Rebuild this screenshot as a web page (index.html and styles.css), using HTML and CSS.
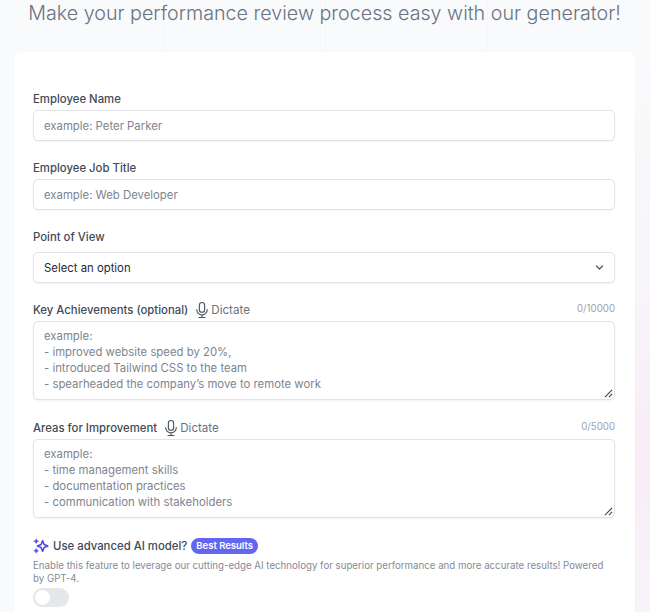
FILE: index.html
```html
<html>
<head>
    <link rel="stylesheet" href="styles.css">
</head>
<body>
    <div class="page">
        <div class="grid-lines"><span></span><span></span><span></span></div>
        <h1 class="title">Make your performance review process easy with our generator!</h1>
        <form class="card">
            <div class="field">
                <label class="label">Employee Name</label>
                <div class="input placeholder">example: Peter Parker</div>
            </div>
            <div class="field">
                <label class="label">Employee Job Title</label>
                <div class="input placeholder">example: Web Developer</div>
            </div>
            <div class="field">
                <label class="label label-select">Point of View</label>
                <div class="input select">
                    <span>Select an option</span>
                    <svg class="chevron" viewBox="0 0 20 20" fill="none" stroke="#4b5563" stroke-width="1.6" stroke-linecap="round" stroke-linejoin="round"><path d="M6 8l4 4 4-4"/></svg>
                </div>
            </div>
            <div class="field field-area">
                <div class="label-row">
                    <label class="label">Key Achievements (optional)</label>
                    <span class="dictate">
                        <svg class="mic" viewBox="0 0 24 24" fill="none" stroke="#4b5563" stroke-width="1.5" stroke-linecap="round" stroke-linejoin="round"><rect x="8.5" y="2" width="7" height="13" rx="3.5"/><path d="M5 11.5a7 7 0 0 0 14 0M12 18.5V22M8 22h8"/></svg>
                        Dictate
                    </span>
                    <span class="count">0/10000</span>
                </div>
                <div class="input textarea placeholder">
                    example:<br>- improved website speed by 20%,<br>- introduced Tailwind CSS to the team<br>- spearheaded the company’s move to remote work
                    <svg class="grip" viewBox="0 0 10 10" fill="none" stroke="#374151" stroke-width="1.2"><path d="M1 9l8-8M5.5 9L9 5.5"/></svg>
                </div>
            </div>
            <div class="field field-area">
                <div class="label-row">
                    <label class="label">Areas for Improvement</label>
                    <span class="dictate">
                        <svg class="mic" viewBox="0 0 24 24" fill="none" stroke="#4b5563" stroke-width="1.5" stroke-linecap="round" stroke-linejoin="round"><rect x="8.5" y="2" width="7" height="13" rx="3.5"/><path d="M5 11.5a7 7 0 0 0 14 0M12 18.5V22M8 22h8"/></svg>
                        Dictate
                    </span>
                    <span class="count">0/5000</span>
                </div>
                <div class="input textarea placeholder">
                    example:<br>- time management skills<br>- documentation practices<br>- communication with stakeholders
                    <svg class="grip" viewBox="0 0 10 10" fill="none" stroke="#374151" stroke-width="1.2"><path d="M1 9l8-8M5.5 9L9 5.5"/></svg>
                </div>
            </div>
            <div class="advanced">
                <div class="advanced-head">
                    <svg class="sparkle" viewBox="0 0 20 20" fill="none" stroke="#4f46e5" stroke-width="2" stroke-linejoin="round"><path d="M12 3.5l1.9 4.6 4.6 1.9-4.6 1.9L12 16.500l-1.900-4.600L5.500 10l4.600-1.900z"/><path d="M4 1l.9 2.100L7 4l-2.100.9L4 7l-.9-2.100L1 4l2.100-.9zM4 13l.9 2.100L7 16l-2.100.9L4 19l-.9-2.100L1 16l2.100-.9z" fill="#4f46e5" stroke-width="0.6"/></svg>
                    <span class="advanced-label">Use advanced AI model?</span>
                    <span class="badge">Best Results</span>
                </div>
                <p class="advanced-text">Enable this feature to leverage our cutting-edge AI technology for superior performance and more accurate results! Powered by GPT-4.</p>
                <div class="toggle"><span class="knob"></span></div>
            </div>
        </form>
    </div>
</body>
</html>
```

FILE: styles.css
```css
html, body {
    margin: 0;
    height: 100%;
    overflow: hidden;
}
body {
    font-family: Inter, "Liberation Sans", sans-serif;
    color: #374151;
}
.page {
    position: relative;
    height: 612px;
    overflow: hidden;
    padding: 0 15px 0 14px;
    box-sizing: border-box;
    background: radial-gradient(circle at 100% 75%, #f9ecf6 0, #f8f5fb 22%, #f8fafc 50%);
}
.grid-lines {
    position: absolute;
    top: 0;
    left: 0;
    width: 100%;
    height: 52px;
}
.grid-lines span {
    position: absolute;
    top: 0;
    bottom: 0;
    width: 1px;
    background-color: #f3f5f8;
}
.grid-lines span:nth-child(1) { left: 163px; }
.grid-lines span:nth-child(2) { left: 325px; }
.grid-lines span:nth-child(3) { left: 487px; }
.title {
    position: relative;
    margin: 0;
    height: 52px;
    font-size: 19.7px;
    line-height: 26px;
    font-weight: 300;
    color: #6b7280;
    text-align: center;
    white-space: nowrap;
}
.card {
    position: relative;
    background-color: #fff;
    border-radius: 6px;
    box-shadow: 0 1px 2px rgba(0, 0, 0, 0.05);
    padding: 39px 20px 0 19px;
    height: 700px;
}
.field {
    margin-bottom: 19px;
}
.field-area {
    margin-bottom: 20px;
}
.label {
    display: block;
    font-size: 11.35px;
    line-height: 16px;
    font-weight: 500;
    color: #414a58;
    margin-bottom: 3px;
}
.label-select {
    margin-bottom: 7px;
}
.label-row {
    display: flex;
    align-items: center;
    height: 16px;
    margin-bottom: 3px;
}
.label-row .label {
    margin-bottom: 0;
}
.dictate {
    display: flex;
    align-items: center;
    margin-left: 5px;
    font-size: 11.6px;
    color: #6b7280;
}
.mic {
    width: 18px;
    height: 18px;
}
.count {
    margin-left: auto;
    font-size: 9.7px;
    color: #9ca3af;
    position: relative;
    top: -2px;
}
.input {
    box-sizing: border-box;
    height: 31px;
    border: 1px solid #e0e2e7;
    border-radius: 5px;
    padding: 0 10px;
    font-size: 11.35px;
    line-height: 30px;
    background-color: #fff;
    box-shadow: 0 1px 2px rgba(0, 0, 0, 0.05);
}
.placeholder {
    color: #7d8490;
}
.select {
    display: flex;
    align-items: center;
    justify-content: space-between;
    color: #1f2937;
}
.chevron {
    width: 15px;
    height: 15px;
    margin-right: -3px;
}
.textarea {
    position: relative;
    height: 79px;
    padding: 6px 10px;
    line-height: 16px;
}
.grip {
    position: absolute;
    right: 1px;
    bottom: 1px;
    width: 9px;
    height: 9px;
}
.advanced {
    margin-top: -1px;
}
.advanced-head {
    display: flex;
    align-items: center;
    height: 17px;
}
.sparkle {
    width: 16px;
    height: 16px;
    margin-right: 4px;
}
.advanced-label {
    font-size: 11.35px;
    font-weight: 500;
    color: #414a58;
}
.badge {
    margin-left: 4px;
    padding: 0 5px;
    height: 16px;
    line-height: 16px;
    border-radius: 8px;
    background-color: #6366f1;
    color: #fff;
    font-size: 9.5px;
    font-weight: 600;
}
.advanced-text {
    margin: 5px 0 3px;
    font-size: 9.7px;
    line-height: 13px;
    color: #858b96;
}
.toggle {
    width: 36px;
    height: 19px;
    border-radius: 10px;
    background-color: #e5e7eb;
}
.knob {
    display: block;
    width: 15px;
    height: 15px;
    border: 2px solid #e5e7eb;
    border-radius: 50%;
    background-color: #fff;
}
```
